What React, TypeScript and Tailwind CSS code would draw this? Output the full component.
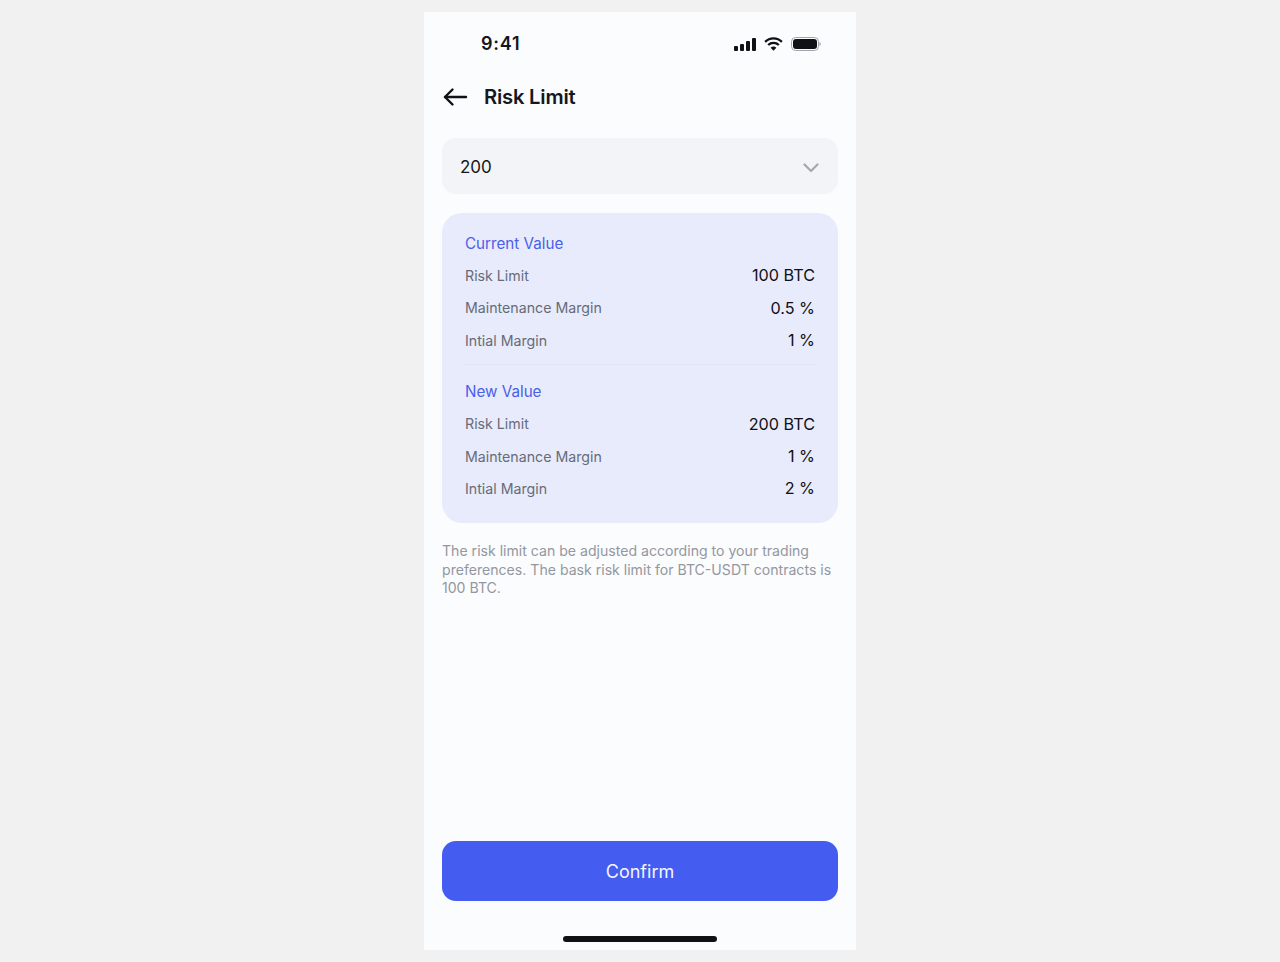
import React from 'react';

const currentRows = [
  { label: 'Risk Limit', value: '100 BTC' },
  { label: 'Maintenance Margin', value: '0.5 %' },
  { label: 'Intial Margin', value: '1 %' },
];

const newRows = [
  { label: 'Risk Limit', value: '200 BTC' },
  { label: 'Maintenance Margin', value: '1 %' },
  { label: 'Intial Margin', value: '2 %' },
];

const ValueGroup: React.FC<{ title: string; rows: { label: string; value: string }[] }> = ({ title, rows }) => (
  <div>
    <p className="h-[22px] text-[15.2px] leading-[22px] text-[#4a5fe8]">{title}</p>
    <div className="mt-[9.5px] flex flex-col gap-[10.4px]">
      {rows.map((row) => (
        <div key={row.label} className="flex h-[22px] items-center justify-between">
          <span className="text-[14.2px] text-[#666b78]">{row.label}</span>
          <span className="text-[16.2px] text-[#0f1115]">{row.value}</span>
        </div>
      ))}
    </div>
  </div>
);

const App: React.FC = () => {
  return (
    <div className="flex min-h-[962px] justify-center bg-[#f1f1f1] pt-3 font-['Inter',sans-serif]">
      <div className="flex h-[938px] w-[432px] flex-col bg-[#fafcfe]">
        <div className="flex h-[62px] shrink-0 items-center justify-between pl-[57px] pr-[35px]">
          <span className="text-[18px] font-semibold tracking-[0.75px] text-[#15171c]">9:41</span>
          <div className="flex items-center gap-[8px] pt-[2px]">
            <svg width="22" height="13" viewBox="0 0 22 13" fill="#0f1115">
              <rect x="0" y="8" width="4" height="5" rx="1" />
              <rect x="6" y="6" width="4" height="7" rx="1" />
              <rect x="12" y="3" width="4" height="10" rx="1" />
              <rect x="18" y="0" width="4" height="13" rx="1" />
            </svg>
            <svg width="19" height="14" viewBox="0 0 20 14" fill="none">
              <path d="M1.2 4.8a12.4 12.4 0 0 1 17.6 0" stroke="#0f1115" strokeWidth="2.4" />
              <path d="M4.4 8a8 8 0 0 1 11.2 0" stroke="#0f1115" strokeWidth="2.4" />
              <path d="M7 11a4 4 0 0 1 6 0l-3 3z" fill="#0f1115" />
            </svg>
            <svg width="30" height="14" viewBox="0 0 30 14" fill="none">
              <rect x="0.5" y="0.5" width="27" height="13" rx="4" stroke="#a3a5aa" />
              <rect x="2" y="2" width="24" height="10" rx="3" fill="#0f1115" />
              <path d="M28.5 5v4c.8-.3 1.3-1.1 1.3-2s-.5-1.7-1.3-2z" fill="#a3a5aa" />
            </svg>
          </div>
        </div>

        <div className="flex h-[46px] shrink-0 items-center gap-[16px] px-[19px]">
          <svg width="25" height="20" viewBox="0 0 25 20" fill="none" stroke="#0f1115" strokeWidth="2.4" strokeLinecap="round" strokeLinejoin="round">
            <path d="M23 10H2" />
            <path d="M9.5 2.5 2 10l7.5 7.5" />
          </svg>
          <h1 className="text-[20.2px] font-semibold tracking-[-0.2px] text-[#15171c]">Risk Limit</h1>
        </div>

        <div className="mx-[18px] mt-[18px] flex h-[56px] shrink-0 items-center justify-between rounded-[14px] bg-[#f3f4f7] pl-[18px] pr-[19px] pt-[3px]">
          <span className="text-[17px] text-[#15171c]">200</span>
          <svg width="16" height="10" viewBox="0 0 16 10" fill="none" stroke="#a5a8ae" strokeWidth="2.2" strokeLinecap="round" strokeLinejoin="round">
            <path d="M1.5 1.5 8 8l6.5-6.5" />
          </svg>
        </div>

        <div className="mx-[18px] mt-[19px] h-[309.5px] shrink-0 rounded-[20px] bg-[#e8ebfc] px-[23px] pt-[20px]">
          <ValueGroup title="Current Value" rows={currentRows} />
          <div className="mt-[13px] h-px bg-[#dfe3f6]" />
          <div className="mt-[16px]">
            <ValueGroup title="New Value" rows={newRows} />
          </div>
        </div>

        <p className="mx-[18px] mt-[19.5px] text-[14.1px] leading-[18.5px] text-[#94979f]">
          The risk limit can be adjusted according to your trading preferences. The bask risk limit for BTC-USDT contracts is 100 BTC.
        </p>

        <button
          type="button"
          className="mx-[18px] mt-auto flex h-[60px] shrink-0 items-center justify-center rounded-[14px] bg-[#445cf0] text-[18px] text-[#f5f6ff]"
        >
          Confirm
        </button>

        <div className="mb-[8px] mt-[35px] flex shrink-0 justify-center">
          <div className="h-[6px] w-[154px] rounded-full bg-[#0f1115]" />
        </div>
      </div>
    </div>
  );
};

export default App;
